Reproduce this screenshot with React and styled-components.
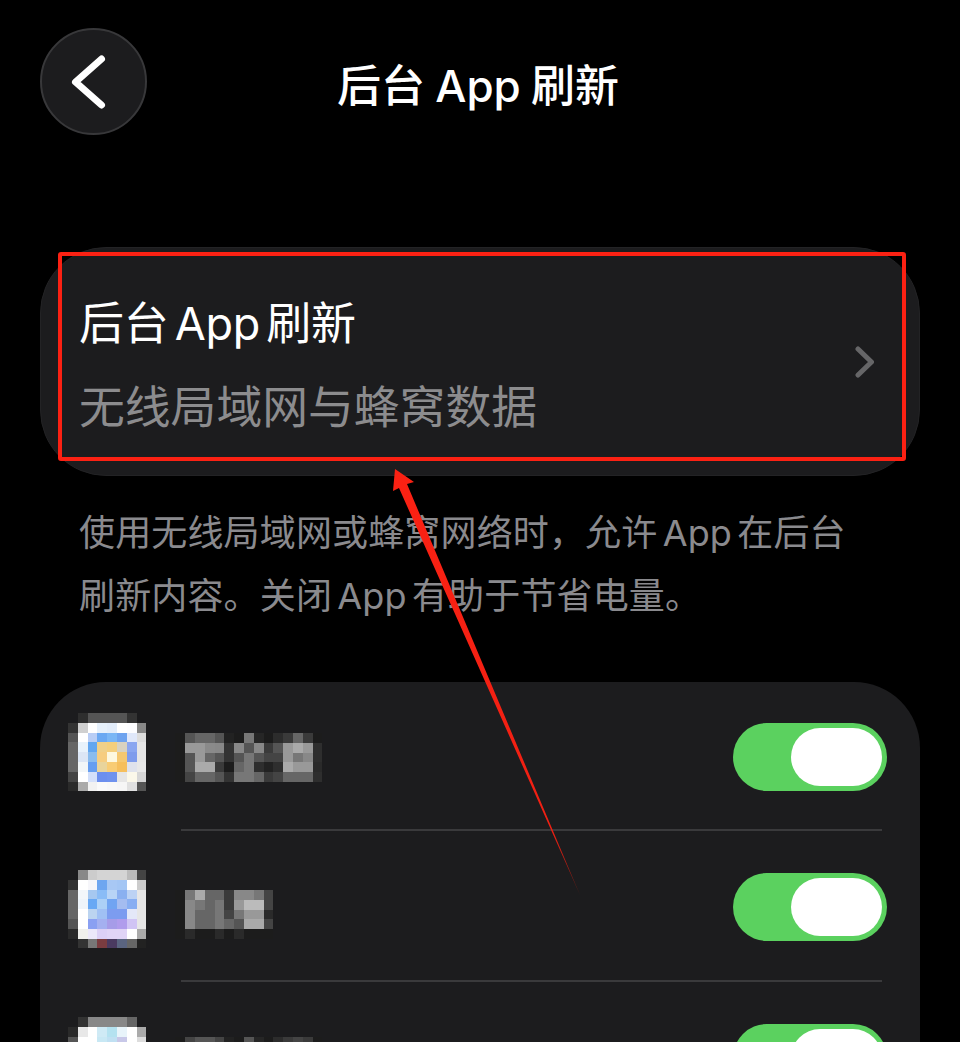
import styled, { createGlobalStyle } from "styled-components";

const GlobalStyle = createGlobalStyle`
  html, body {
    margin: 0;
    height: 1042px;
    overflow: hidden;
    background: #000;
  }
  * {
    box-sizing: border-box;
  }
`;

const Page = styled.div`
  position: relative;
  width: 960px;
  height: 1042px;
  overflow: hidden;
  padding: 28px 40px 0;
  font-family: "Inter", "Noto Sans CJK SC", sans-serif;
`;

const Header = styled.header`
  display: grid;
  grid-template-columns: 107px 1fr 107px;
  align-items: center;
  height: 107px;
`;

const BackButton = styled.button`
  width: 107px;
  height: 107px;
  padding: 0;
  display: flex;
  align-items: center;
  justify-content: center;
  border-radius: 50%;
  border: 2px solid #38383a;
  background: #1c1c1e;
`;

const Title = styled.h1`
  margin: 2px 4px 0 0;
  text-align: center;
  font-size: 44px;
  font-weight: 500;
  word-spacing: -1.5px;
  color: #fff;
`;

const SummaryCard = styled.section`
  position: relative;
  display: flex;
  align-items: flex-start;
  justify-content: space-between;
  height: 229px;
  margin-top: 112px;
  padding: 34px 45px 0 38px;
  border-radius: 66px;
  background: #1c1c1e;
  border: 1px solid #232325;
`;

const SummaryTitle = styled.div`
  font-size: 45px;
  line-height: 84px;
  letter-spacing: -0.3px;
  word-spacing: -6px;
  color: #fff;
`;

const SummarySub = styled.div`
  font-size: 45.8px;
  line-height: 84px;
  color: #8c8c8e;
`;

const Chevron = styled.svg`
  margin-top: 64px;
`;

const Description = styled.p`
  margin: 26px 0 54px;
  padding: 0 39px;
  font-size: 36px;
  line-height: 63px;
  letter-spacing: 0.15px;
  word-spacing: -5px;
  color: #8a8a8e;
`;

const AppCard = styled.section`
  border-radius: 66px;
  background: #1c1c1e;
`;

const AppRow = styled.div`
  display: flex;
  height: 151px;
  padding: 0 38px 0 28px;

  &:first-child {
    height: 149px;
  }
`;

const RowBody = styled.div`
  flex: 1;
  display: flex;
  align-items: center;
  justify-content: space-between;
  margin-left: 35px;
  padding-top: 2px;
  border-bottom: 2px solid #3a3a3c;
`;

const Mosaic = styled.div`
  display: grid;
  grid-template-columns: repeat(${(p) => p.$cols}, 9.8px);
  grid-auto-rows: 9.8px;
  flex-shrink: 0;
  align-self: flex-start;
  margin-top: ${(p) => p.$top}px;
  margin-left: ${(p) => p.$left || 0}px;
  filter: blur(0.7px);
`;

const Toggle = styled.div`
  display: flex;
  justify-content: flex-end;
  flex-shrink: 0;
  width: 154px;
  height: 68px;
  margin-right: -5px;
  padding: 5px;
  border-radius: 34px;
  background: #5bd15f;
`;

const Knob = styled.div`
  width: 91px;
  height: 58px;
  border-radius: 29px;
  background: #fff;
`;

const RedBox = styled.div`
  position: absolute;
  left: 17px;
  right: 13px;
  top: 4px;
  height: 209px;
  border: 4px solid #fb2113;
  border-radius: 3px;
`;

const ArrowLayer = styled.svg`
  position: absolute;
  left: 0;
  top: 0;
  pointer-events: none;
`;

const g = (v) => `#${v}${v}${v}`;

const ICON_ONE = [
  ["1c1c1e", "2e2e2e", "555", "555", "555", "555", "333", "1c1c1e"],
  ["333", "d0d0d0", "fff", "e6f0fb", "e2ecfa", "fff", "fdfdff", "888"],
  ["555", "fff", "b8cdf5", "6aa8f2", "7ab6f5", "6ea3ef", "e0e8fa", "ddd"],
  ["666", "e8f2fb", "62a6f0", "f0d088", "f4cf7c", "d8d2c0", "8aa6f0", "e6e6e6"],
  ["666", "dce6f5", "8abcee", "f6cd80", "fdf8e0", "f5c870", "7f9cec", "e6e6e6"],
  ["666", "f2f6f8", "669ef0", "e8d49c", "f8cc74", "f6bf5c", "dfe2ec", "e8e8e8"],
  ["444", "fff", "d4e0fa", "6c8fee", "6f92ee", "e6e6e6", "fbf8ea", "d6d6d6"],
  ["2a2a2a", "aaa", "f2f2f2", "fafafa", "f8f8f8", "f6f6f6", "e0e0e0", "555"],
];

const ICON_TWO = [
  ["1c1c1e", "888", "ccc", "d4d4d4", "d4d4d4", "d4d4d4", "bbb", "444"],
  ["333", "fff", "f6f6fa", "6ea6f0", "a8c8f4", "a4c6f4", "fff", "ccc"],
  ["666", "f2f6fa", "a6c8f0", "8abcf6", "b8d4f6", "8ab0f0", "bcd2f4", "e6e6e6"],
  ["666", "eef4fa", "68a8f4", "acd0f6", "70a4f2", "a4bcf0", "88aef2", "e6e6e6"],
  ["666", "fff", "bcd4f0", "a0c0f4", "7c9cf0", "7c9cf0", "e4e8f8", "e6e6e6"],
  ["555", "fff", "8aa0f2", "a4b0f0", "a69ce8", "b09cec", "d0c4f4", "e6e6e6"],
  ["2a2a2a", "f0f0ec", "ece8fa", "dcd0f6", "e0d4f6", "e0d4f6", "fff", "aaa"],
  ["1c1c1e", "333", "777", "7a3c40", "4a3a60", "5a6480", "666", "222"],
];

const ICON_THREE = [
  ["1c1c1e", "333", "888", "888", "888", "888", "666", "1c1c1e"],
  ["2a2a2a", "e8e8e8", "fff", "cfeaf5", "b4e2f0", "e8f4fa", "fff", "aaa"],
  ["555", "fff", "fff", "c8e8f4", "c0e0f2", "c8c8e8", "fff", "ddd"],
];

const LABEL_ONE = [
  ["1c", "55", "66", "66", "55", "22", "1c", "77", "26", "1c", "2c", "3a", "66", "3a", "1c"],
  ["1c", "99", "99", "8a", "88", "33", "88", "55", "88", "3a", "55", "99", "aa", "99", "2e"],
  ["1c", "55", "99", "66", "55", "33", "55", "77", "55", "44", "44", "99", "77", "88", "2e"],
  ["1c", "55", "aa", "aa", "3a", "1c", "66", "77", "2e", "22", "2e", "aa", "99", "99", "2a"],
  ["1c", "44", "66", "66", "55", "33", "77", "77", "66", "3a", "44", "66", "66", "66", "2e"],
];

const LABEL_TWO = [
  ["1c", "77", "aa", "66", "66", "3a", "88", "88", "77", "44"],
  ["1c", "88", "77", "66", "77", "3a", "99", "bb", "bb", "44"],
  ["1c", "88", "66", "66", "77", "44", "77", "99", "99", "2a"],
  ["1c", "88", "66", "66", "77", "66", "55", "aa", "aa", "44"],
  ["1c", "2a", "1c", "1c", "2a", "1c", "2a", "1c", "1c", "1c"],
];

const LABEL_THREE = [
  ["1c", "44", "55", "55", "44", "22", "1c", "55", "26", "1c", "2c", "3a", "44", "3a", "1c"],
];

function Pixels({ rows, top, left }) {
  return (
    <Mosaic $cols={rows[0].length} $top={top} $left={left}>
      {rows.flat().map((c, i) => (
        <div key={i} style={{ background: c.length === 2 ? g(c) : `#${c}` }} />
      ))}
    </Mosaic>
  );
}

const APPS = [
  { icon: ICON_ONE, label: LABEL_ONE, iconTop: 31, labelTop: 49 },
  { icon: ICON_TWO, label: LABEL_TWO, iconTop: 39, labelTop: 57 },
  { icon: ICON_THREE, label: LABEL_THREE, iconTop: 35, labelTop: 53 },
];

export default function App() {
  return (
    <Page>
      <GlobalStyle />
      <Header>
        <BackButton aria-label="返回">
          <svg width="50" height="60" viewBox="0 0 50 60" fill="none">
            <path
              d="M32.5 7 L6.5 30 L32.5 53"
              stroke="#fff"
              strokeWidth="7"
              strokeLinecap="round"
              strokeLinejoin="round"
            />
          </svg>
        </BackButton>
        <Title>后台 App 刷新</Title>
      </Header>

      <SummaryCard>
        <div>
          <SummaryTitle>后台 App 刷新</SummaryTitle>
          <SummarySub>无线局域网与蜂窝数据</SummarySub>
        </div>
        <Chevron width="24" height="36" viewBox="0 0 24 36" fill="none">
          <path
            d="M8 3 L21.5 16 L8 29"
            stroke="#666668"
            strokeWidth="5"
            strokeLinecap="round"
            strokeLinejoin="round"
          />
        </Chevron>
        <RedBox />
      </SummaryCard>

      <Description>
        使用无线局域网或蜂窝网络时，允许 App 在后台
        <br />
        刷新内容。关闭 App 有助于节省电量。
      </Description>

      <AppCard>
        {APPS.map((app, i) => (
          <AppRow key={i}>
            <Pixels rows={app.icon} top={app.iconTop} />
            <RowBody>
              <Pixels rows={app.label} top={app.labelTop} left={-6} />
              <Toggle>
                <Knob />
              </Toggle>
            </RowBody>
          </AppRow>
        ))}
      </AppCard>

      <ArrowLayer width="960" height="1042" viewBox="0 0 960 1042">
        <defs>
          <linearGradient id="tail" x1="395" y1="469" x2="579" y2="893" gradientUnits="userSpaceOnUse">
            <stop offset="0" stopColor="#fb2113" />
            <stop offset="0.85" stopColor="#f02013" />
            <stop offset="1" stopColor="#7a1a12" />
          </linearGradient>
        </defs>
        <path
          d="M395 469 L414 482 L407 484 L580 895 L399 488 L393 491 Z"
          fill="url(#tail)"
        />
      </ArrowLayer>
    </Page>
  );
}
